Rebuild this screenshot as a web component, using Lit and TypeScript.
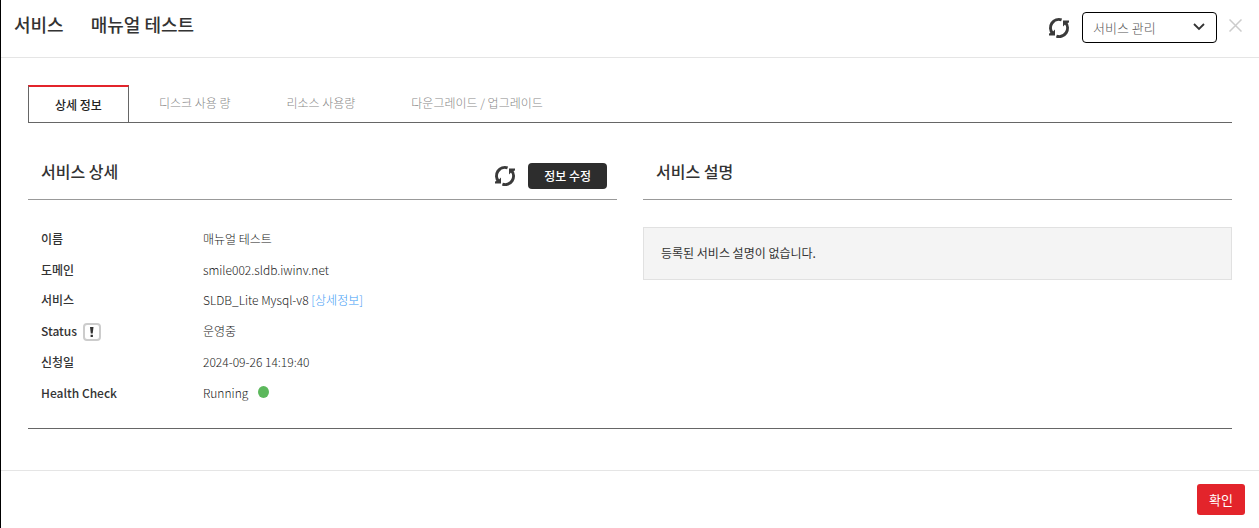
import { LitElement, html, css } from "lit";
import { customElement, state } from "lit/decorators.js";

@customElement("refresh-button")
class RefreshButton extends LitElement {
  static styles = css`
    :host { display: flex; flex: none; }
    .refresh {
      display: flex;
      padding: 0;
      border: 0;
      background: none;
      color: #3a3a3a;
      cursor: pointer;
    }
  `;

  render() {
    return html`
      <button class="refresh" type="button" aria-label="새로고침">
        <svg width="22" height="22" viewBox="0 0 22 22" fill="none" stroke="currentColor" stroke-width="3">
          <path d="M13.6 2.9A8.4 8.4 0 0 0 4.6 16.4" />
          <path d="M8.4 19.1A8.4 8.4 0 0 0 17.4 5.6" />
          <path d="M1 18.4V16.4L4 15.5L7 12.4V18.4Z" fill="currentColor" stroke="none" />
          <path d="M21 3.6V5.6L18 6.5L15 9.6V3.6Z" fill="currentColor" stroke="none" />
        </svg>
      </button>
    `;
  }
}

const TABS = ["상세 정보", "디스크 사용 량", "리소스 사용량", "다운그레이드 / 업그레이드"];

@customElement("app-root")
class AppRoot extends LitElement {
  @state() private active = 0;

  static styles = css`
    :host {
      display: block;
      font-family: "Noto Sans CJK KR", "Noto Sans", sans-serif;
      font-size: 12px;
      line-height: 18px;
      color: #333;
    }
    * { box-sizing: border-box; }
    button, select { font-family: inherit; }
    button { cursor: pointer; }
    h1, h2, p, dl, dd { margin: 0; }
    .dialog {
      display: flex;
      flex-direction: column;
      min-height: 100vh;
      border-left: 1px solid #000;
      background: #fff;
    }
    .header {
      display: flex;
      justify-content: space-between;
      height: 58px;
      padding: 12px 17px 0 13px;
      border-bottom: 1px solid #e5e5e5;
    }
    .title {
      display: flex;
      gap: 27px;
      font-size: 18px;
      line-height: 24px;
      font-weight: 500;
    }
    .tools { display: flex; align-items: flex-start; gap: 12px; }
    .tools refresh-button { padding-top: 5px; }
    .picker { display: flex; position: relative; }
    .picker select {
      appearance: none;
      width: 135px;
      height: 31px;
      padding: 0 10px;
      border: 1px solid #000;
      border-radius: 4px;
      background: #fff;
      color: #555;
      font-size: 13px;
      font-weight: 300;
    }
    .picker svg { position: absolute; right: 12px; top: 11px; pointer-events: none; }
    .close { display: flex; padding: 7px 0; border: 0; background: none; color: #ccc; }
    .body { padding: 27px 27px 0; }
    .tabs { display: flex; height: 38px; border-bottom: 1px solid #666; }
    .tab {
      padding: 0 28px 2px;
      border: 0;
      background: none;
      color: #888;
      font-size: 12px;
      line-height: 18px;
      font-weight: 300;
    }
    .tab.active {
      margin-right: 2px;
      padding: 0 26px;
      border: 1px solid #666;
      border-top: 2px solid #e3242b;
      border-bottom: 0;
      color: #222;
      font-weight: 500;
    }
    .columns {
      display: grid;
      grid-template-columns: 1fr 1fr;
      gap: 26px;
      padding: 27px 0 16px;
      border-bottom: 1px solid #666;
    }
    .section {
      display: flex;
      justify-content: space-between;
      height: 50px;
      padding: 10px 10px 0 13px;
      margin-bottom: 27px;
      border-bottom: 1px solid #999;
    }
    .section h2 { font-size: 16px; line-height: 22px; font-weight: 500; }
    .actions { display: flex; align-items: center; gap: 12px; height: 31px; }
    .edit {
      height: 26px;
      padding: 0 16px;
      border: 0;
      border-radius: 4px;
      background: #2d2d2d;
      color: #fff;
      font-size: 12px;
      font-weight: 500;
    }
    .details {
      display: grid;
      grid-template-columns: 162px 1fr;
      grid-template-rows: 31px 30px;
      grid-auto-rows: 31px;
      padding-left: 13px;
    }
    .details dt { display: flex; gap: 6px; padding-top: 3px; font-weight: 500; }
    .details dd { padding-top: 3px; font-weight: 300; color: #222; }
    .details a { color: #3d9bf5; text-decoration: none; }
    .info { display: flex; height: 20px; padding: 1px 0 0; border: 0; background: none; }
    .dot {
      display: inline-block;
      width: 11px;
      height: 12px;
      margin-left: 7px;
      border-radius: 50%;
      background: #5cb85c;
    }
    .empty { padding: 16px 17px 17px; border: 1px solid #e1e1e1; background: #f4f4f4; font-weight: 400; }
    .footer {
      display: flex;
      justify-content: flex-end;
      margin-top: 41px;
      padding: 13px 14px;
      border-top: 1px solid #e5e5e5;
    }
    .confirm {
      height: 31px;
      padding: 0 12px;
      border: 0;
      border-radius: 3px;
      background: #e3242b;
      color: #fff;
      font-size: 13px;
      font-weight: 400;
    }
  `;

  render() {
    return html`
      <div class="dialog">
        <header class="header">
          <h1 class="title"><span>서비스</span><span>매뉴얼 테스트</span></h1>
          <div class="tools">
            <refresh-button></refresh-button>
            <div class="picker">
              <select aria-label="서비스 관리">
                <option>서비스 관리</option>
              </select>
              <svg width="12" height="9" viewBox="0 0 12 9" fill="none" stroke="#333" stroke-width="1.8">
                <path d="M1 1L6 6L11 1" />
              </svg>
            </div>
            <button class="close" type="button" aria-label="닫기">
              <svg width="13" height="13" viewBox="0 0 13 13" stroke="currentColor" stroke-width="1.5">
                <path d="M.5 .5L12.5 12.5M12.5 .5L.5 12.5" />
              </svg>
            </button>
          </div>
        </header>
        <main class="body">
          <div class="tabs" role="tablist">
            ${TABS.map(
              (label, i) => html`<button
                class="tab ${i === this.active ? "active" : ""}"
                type="button"
                role="tab"
                aria-selected=${i === this.active}
                @click=${() => (this.active = i)}
              >${label}</button>`
            )}
          </div>
          <div class="columns">
            <section>
              <div class="section">
                <h2>서비스 상세</h2>
                <div class="actions">
                  <refresh-button></refresh-button>
                  <button class="edit" type="button">정보 수정</button>
                </div>
              </div>
              <dl class="details">
                <dt>이름</dt>
                <dd>매뉴얼 테스트</dd>
                <dt>도메인</dt>
                <dd>smile002.sldb.iwinv.net</dd>
                <dt>서비스</dt>
                <dd>SLDB_Lite Mysql-v8 <a href="#">[상세정보]</a></dd>
                <dt>
                  Status
                  <button class="info" type="button" aria-label="Status 안내">
                    <svg width="18" height="18" viewBox="0 0 18 18">
                      <rect x="1" y="1" width="16" height="16" rx="3" fill="#fff" stroke="#ccc" stroke-width="2" />
                      <path d="M7 4H10.5L9.7 10.5H7.8ZM7.6 11.8H9.9V14H7.6Z" fill="#333" />
                    </svg>
                  </button>
                </dt>
                <dd>운영중</dd>
                <dt>신청일</dt>
                <dd>2024-09-26 14:19:40</dd>
                <dt>Health Check</dt>
                <dd>Running <span class="dot"></span></dd>
              </dl>
            </section>
            <section>
              <div class="section"><h2>서비스 설명</h2></div>
              <p class="empty">등록된 서비스 설명이 없습니다.</p>
            </section>
          </div>
        </main>
        <footer class="footer">
          <button class="confirm" type="button">확인</button>
        </footer>
      </div>
    `;
  }
}
